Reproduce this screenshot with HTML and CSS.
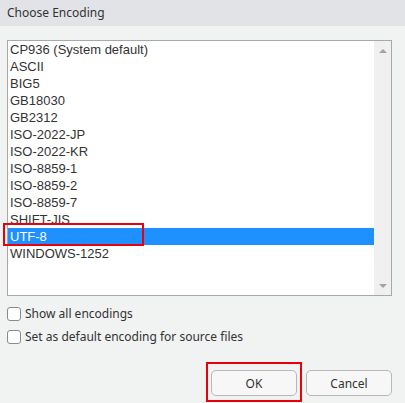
FILE: index.html
```html
<!DOCTYPE html>
<html>
<head>
<meta charset="utf-8">
<link rel="stylesheet" href="styles.css">
</head>
<body>
<div class="dialog">
  <div class="titlebar">Choose Encoding</div>
  <div class="content">
    <div class="listbox">
      <ul class="items">
        <li>CP936 (System default)</li>
        <li>ASCII</li>
        <li>BIG5</li>
        <li>GB18030</li>
        <li>GB2312</li>
        <li>ISO-2022-JP</li>
        <li>ISO-2022-KR</li>
        <li>ISO-8859-1</li>
        <li>ISO-8859-2</li>
        <li>ISO-8859-7</li>
        <li>SHIFT-JIS</li>
        <li class="selected">UTF-8</li>
        <li>WINDOWS-1252</li>
      </ul>
      <div class="scrollbar">
        <span class="arrow up"></span>
        <span class="arrow down"></span>
      </div>
      <div class="highlight hl-item"></div>
    </div>
    <label class="check"><span class="box"></span>Show all encodings</label>
    <label class="check"><span class="box"></span>Set as default encoding for source files</label>
    <div class="buttons">
      <button class="btn ok">OK<span class="highlight hl-ok"></span></button>
      <button class="btn">Cancel</button>
    </div>
  </div>
</div>
</body>
</html>
```
FILE: styles.css
```css
html, body {
  margin: 0;
  padding: 0;
}
body {
  width: 405px;
  height: 403px;
  overflow: hidden;
  background: #f1f2f2;
  font-family: "Noto Sans", "Open Sans", sans-serif;
}
.dialog {
  width: 405px;
  height: 403px;
  display: flex;
  flex-direction: column;
}
.titlebar {
  height: 26px;
  background: #e2e3e6;
  color: #333;
  font-size: 12px;
  line-height: 26px;
  padding-left: 7px;
}
.content {
  padding: 14px 13px 0 7px;
  display: flex;
  flex-direction: column;
}
.listbox {
  position: relative;
  height: 254px;
  border: 1px solid #a8a8a8;
  background: #fff;
  display: flex;
}
.items {
  list-style: none;
  margin: 0;
  padding: 0;
  flex: 1;
  font-family: "Liberation Sans", Arial, sans-serif;
  font-size: 13px;
  color: #333;
}
.items li {
  height: 17px;
  line-height: 17px;
  padding-left: 2px;
}
.items li.selected {
  background: #1e90ff;
  color: #fff;
}
.scrollbar {
  width: 17px;
  background: #f0f0f0;
  display: flex;
  flex-direction: column;
  justify-content: space-between;
  align-items: center;
  padding: 8px 0 7px;
}
.arrow {
  width: 0;
  height: 0;
  border-left: 4px solid transparent;
  border-right: 4px solid transparent;
}
.arrow.up {
  border-bottom: 4px solid #a3a3a3;
}
.arrow.down {
  border-top: 4px solid #a3a3a3;
}
.highlight {
  position: absolute;
  border: 2px solid #e8000b;
  box-sizing: border-box;
  pointer-events: none;
}
.hl-item {
  left: -5px;
  top: 182px;
  width: 141px;
  height: 23px;
}
.check {
  display: flex;
  align-items: center;
  height: 23px;
  font-size: 12px;
  color: #333;
}
.check:first-of-type {
  margin-top: 6px;
}
.box {
  width: 12px;
  height: 12px;
  border: 1px solid #8a8a8a;
  border-radius: 3px;
  background: #fff;
  margin-right: 4px;
}
.buttons {
  display: flex;
  justify-content: flex-end;
  gap: 9px;
  margin-top: 22px;
}
.btn {
  position: relative;
  width: 86px;
  height: 26px;
  border: 1px solid #b8b8b8;
  border-radius: 5px;
  background: #f7f7f7;
  color: #333;
  font-family: "Noto Sans", "Open Sans", sans-serif;
  font-size: 12px;
  padding: 0;
}
.hl-ok {
  left: -6px;
  top: -9px;
  width: 96px;
  height: 40px;
}
```
